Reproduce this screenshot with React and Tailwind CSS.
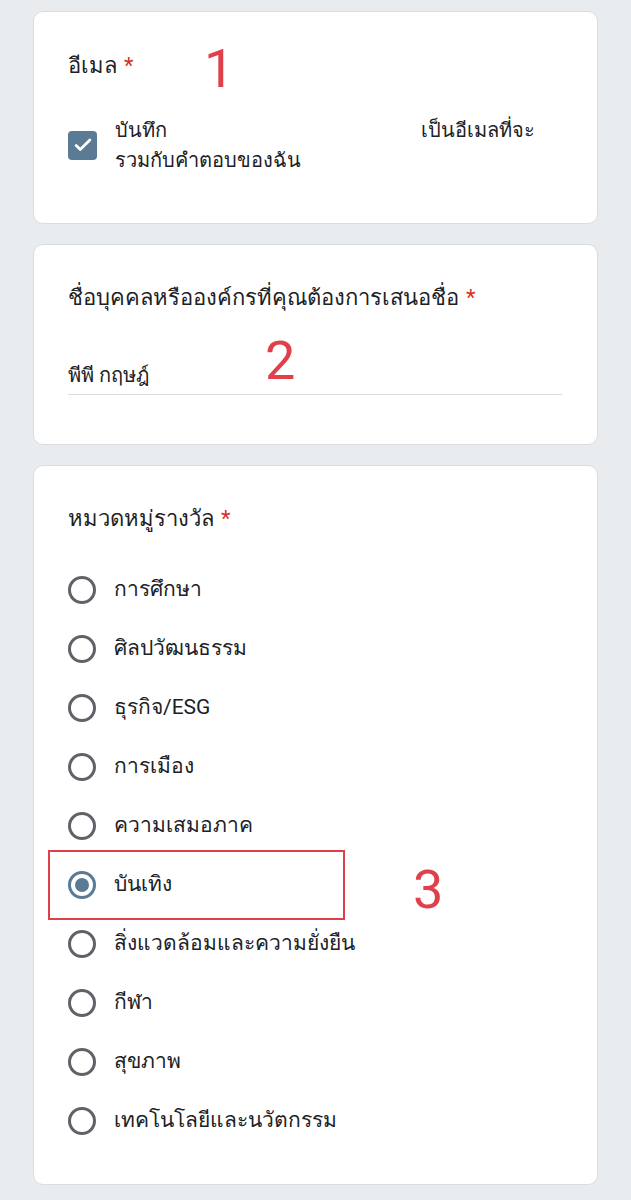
import React, { useState } from "react";

const categories = [
  "การศึกษา",
  "ศิลปวัฒนธรรม",
  "ธุรกิจ/ESG",
  "การเมือง",
  "ความเสมอภาค",
  "บันเทิง",
  "สิ่งแวดล้อมและความยั่งยืน",
  "กีฬา",
  "สุขภาพ",
  "เทคโนโลยีและนวัตกรรม",
];

const Required = () => <span className="text-[#d93025] ml-[7px]">*</span>;

const Radio = ({ checked }) => (
  <div
    className={`w-[28px] h-[28px] rounded-full border-[3px] flex items-center justify-center shrink-0 ${
      checked ? "border-[#5b7a94]" : "border-[#5f6368]"
    }`}
  >
    {checked && <div className="w-[14px] h-[14px] rounded-full bg-[#5b7a94]" />}
  </div>
);

export default function App() {
  const [selected, setSelected] = useState("บันเทิง");

  return (
    <div
      className="min-h-[1200px] bg-[#e8ecef] px-[33px] pt-[11px] pb-[16px] flex flex-col gap-[20px] text-[#202124]"
      style={{ fontFamily: "Roboto, 'Noto Sans', 'DejaVu Sans', sans-serif" }}
    >
      {/* EMAIL */}
      <section className="relative bg-white border border-[#dadce0] rounded-[10px] h-[213px] pl-[34px] pt-[40px]">
        <div className="text-[22px] leading-[28px]">
          อีเมล<Required />
        </div>
        <span className="absolute left-[170px] top-[30px] text-[54px] leading-none text-[#e0404a]">1</span>

        <div className="mt-[35px] flex items-center gap-[18px]">
          <div className="w-[29px] h-[29px] rounded-[4px] bg-[#5b7a94] flex items-center justify-center shrink-0">
            <svg width="22" height="22" viewBox="0 0 24 24" fill="none">
              <path d="M4.5 12.5l4.5 4.5 10.5-10.5" stroke="white" strokeWidth="3" strokeLinecap="round" strokeLinejoin="round" />
            </svg>
          </div>
          <div className="text-[20px] leading-[30px]">
            <div className="flex justify-between w-[420px]">
              <span>บันทึก</span>
              <span>เป็นอีเมลที่จะ</span>
            </div>
            <div>รวมกับคำตอบของฉัน</div>
          </div>
        </div>
      </section>

      {/* NAME */}
      <section className="relative bg-white border border-[#dadce0] rounded-[10px] h-[201px] pl-[34px] pr-[35px] pt-[39px]">
        <div className="text-[22px] leading-[28px]">
          ชื่อบุคคลหรือองค์กรที่คุณต้องการเสนอชื่อ<Required />
        </div>
        <span className="absolute left-[231px] top-[89px] text-[54px] leading-none text-[#e0404a]">2</span>
        <div className="mt-[48px] text-[20px] leading-[30px] pb-[4px] border-b border-[#dadce0]">
          พีพี กฤษฎ์
        </div>
      </section>

      {/* CATEGORY */}
      <section className="bg-white border border-[#dadce0] rounded-[10px] h-[720px] pl-[34px] pt-[39px]">
        <div className="text-[22px] leading-[28px]">
          หมวดหมู่รางวัล<Required />
        </div>

        <div className="mt-[27px] flex flex-col">
          {categories.map((c) => {
            const isOn = selected === c;
            return (
              <div
                key={c}
                onClick={() => setSelected(c)}
                className="relative h-[59px] flex items-center gap-[18px] cursor-pointer"
              >
                <Radio checked={isOn} />
                <span className="text-[21px]">{c}</span>
                {c === "บันเทิง" && (
                  <>
                    <div className="absolute left-[-20px] top-[-5px] w-[297px] h-[70px] border-2 border-[#e0404a]" />
                    <span className="absolute left-[345px] top-[8px] text-[54px] leading-none text-[#e0404a]">3</span>
                  </>
                )}
              </div>
            );
          })}
        </div>
      </section>
    </div>
  );
}
